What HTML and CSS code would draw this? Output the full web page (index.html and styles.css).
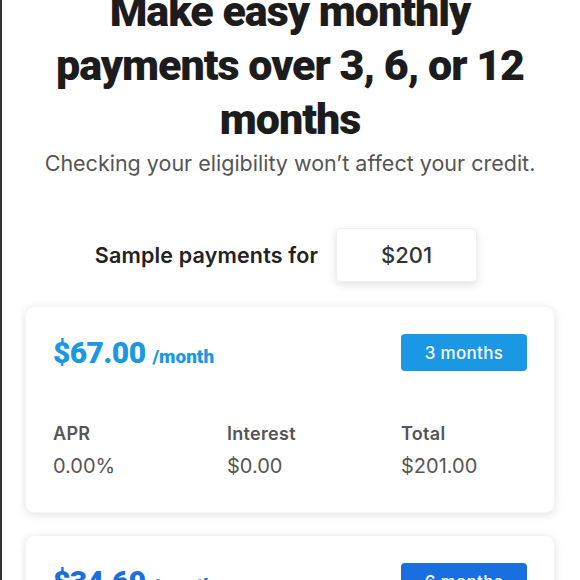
FILE: index.html
```html
<!DOCTYPE html>
<html lang="en">
<head>
<meta charset="utf-8">
<title>Monthly payments</title>
<link rel="stylesheet" href="styles.css">
</head>
<body>
<main class="page">
  <h1 class="title">Make easy monthly payments over 3, 6, or 12 months</h1>
  <p class="subtitle">Checking your eligibility won’t affect your credit.</p>
  <div class="sample">
    <span class="sample-label">Sample payments for</span>
    <div class="amount">$201</div>
  </div>
  <section class="card">
    <div class="card-head">
      <div class="price"><span class="price-value">$67.00</span> <span class="price-unit">/month</span></div>
      <span class="badge">3 months</span>
    </div>
    <div class="stats">
      <div class="stat"><div class="stat-label">APR</div><div class="stat-value">0.00%</div></div>
      <div class="stat"><div class="stat-label">Interest</div><div class="stat-value">$0.00</div></div>
      <div class="stat"><div class="stat-label">Total</div><div class="stat-value">$201.00</div></div>
    </div>
  </section>
  <section class="card card-alt">
    <div class="card-head">
      <div class="price"><span class="price-value">$34.69</span> <span class="price-unit">/month</span></div>
      <span class="badge">6 months</span>
    </div>
    <div class="stats">
      <div class="stat"><div class="stat-label">APR</div><div class="stat-value">9.99%</div></div>
      <div class="stat"><div class="stat-label">Interest</div><div class="stat-value">$7.14</div></div>
      <div class="stat"><div class="stat-label">Total</div><div class="stat-value">$208.14</div></div>
    </div>
  </section>
</main>
</body>
</html>
```
FILE: styles.css
```css
html, body {
  margin: 0;
  padding: 0;
  background: #ffffff;
}
body {
  border-left: 2px solid #333333;
  min-height: 580px;
  box-sizing: border-box;
  font-family: "Inter", "Liberation Sans", sans-serif;
  overflow: hidden;
}
.page {
  width: 530px;
  margin: 0 0 0 23px;
  display: flex;
  flex-direction: column;
}
.title {
  margin: -16px auto 0;
  max-width: 500px;
  font-family: "Roboto", "Liberation Sans", sans-serif;
  font-size: 43px;
  line-height: 54px;
  font-weight: 900;
  letter-spacing: -1px;
  color: #1c1c1c;
  text-align: center;
}
.subtitle {
  margin: 2px 0 0;
  font-size: 21.5px;
  line-height: 30px;
  font-weight: 400;
  color: #555555;
  text-align: center;
}
.sample {
  margin-top: 50px;
  padding-right: 8px;
  display: flex;
  justify-content: center;
  align-items: center;
  gap: 18px;
}
.sample-label {
  font-size: 21.5px;
  font-weight: 600;
  color: #222222;
  letter-spacing: 0.15px;
}
.amount {
  width: 141px;
  height: 54px;
  box-sizing: border-box;
  display: flex;
  align-items: center;
  justify-content: center;
  border: 1px solid #f0f0f0;
  border-radius: 5px;
  box-shadow: 0 3px 8px rgba(0,0,0,0.12);
  font-size: 22px;
  font-weight: 500;
  color: #333333;
}
.card {
  margin-top: 24px;
  padding: 27px 27px 34px;
  border-radius: 9px;
  background: #ffffff;
  box-shadow: 0 2px 8px rgba(0,0,0,0.12);
  border: 1px solid #f4f4f4;
}
.card + .card {
  margin-top: 22px;
}
.card-head {
  display: flex;
  justify-content: space-between;
  align-items: center;
}
.price {
  color: #1b98e4;
  display: flex;
  align-items: baseline;
  gap: 7px;
  font-family: "Roboto", "Liberation Sans", sans-serif;
}
.price-value {
  font-size: 30px;
  font-weight: 900;
  letter-spacing: -0.6px;
}
.price-unit {
  font-size: 19px;
  font-weight: 900;
}
.badge {
  width: 126px;
  height: 37px;
  box-sizing: border-box;
  display: flex;
  align-items: center;
  justify-content: center;
  background: #1b98e4;
  color: #ffffff;
  border-radius: 4px;
  font-size: 17px;
  font-weight: 500;
  letter-spacing: 0.3px;
}
.card-alt .price { color: #1a6fe0; }
.card-alt .badge { background: #1a6fe0; }
.stats {
  margin-top: 52px;
  display: grid;
  grid-template-columns: repeat(3, 1fr);
  column-gap: 48px;
}
.stat-label {
  font-size: 18px;
  font-weight: 600;
  color: #555555;
  letter-spacing: 0.3px;
}
.stat-value {
  margin-top: 10px;
  font-size: 20px;
  font-weight: 400;
  color: #555555;
}
```
